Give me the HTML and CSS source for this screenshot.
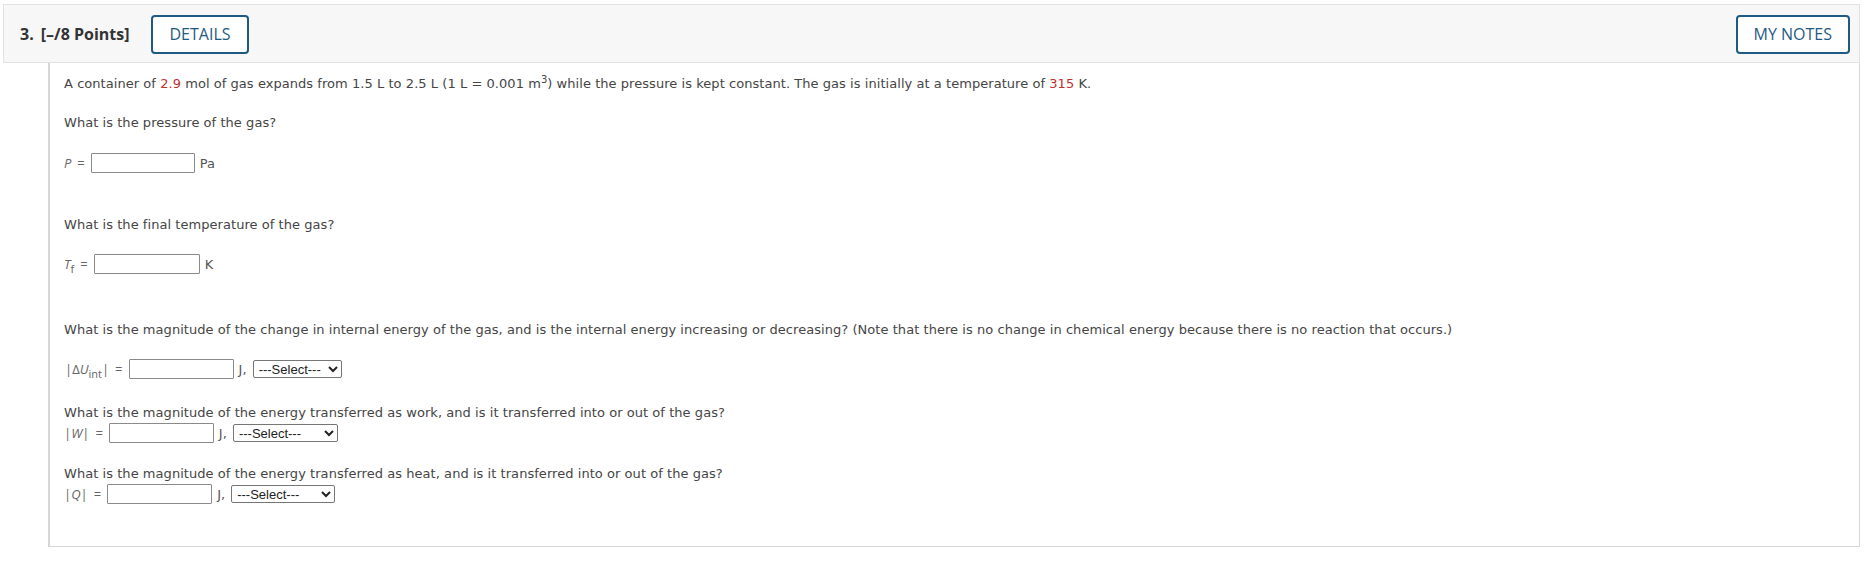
FILE: index.html
```html
<!DOCTYPE html>
<html>
<head>
<meta charset="utf-8">
<link rel="stylesheet" href="styles.css">
</head>
<body>
<div class="question">
  <div class="q-header">
    <div class="q-title"><span class="q-num">3.</span><span class="q-pts">[–/8 Points]</span></div>
    <button class="btn">DETAILS</button>
    <div class="spacer"></div>
    <button class="btn">MY NOTES</button>
  </div>
  <div class="q-body">
    <p class="txt l1">A container of <span class="red">2.9</span> mol of gas expands from 1.5 L to 2.5 L (1 L = 0.001 m<sup>3</sup>) while the pressure is kept constant. The gas is initially at a temperature of <span class="red">315</span> K.</p>
    <p class="txt q1">What is the pressure of the gas?</p>
    <div class="row r-p">
      <span class="lbl"><i>P</i><span class="eq">=</span></span>
      <input class="ans w104" type="text">
      <span class="unit">Pa</span>
    </div>
    <p class="txt q2">What is the final temperature of the gas?</p>
    <div class="row r-t">
      <span class="lbl"><i>T</i><sub>f</sub><span class="eq">=</span></span>
      <input class="ans w106" type="text">
      <span class="unit">K</span>
    </div>
    <p class="txt q3">What is the magnitude of the change in internal energy of the gas, and is the internal energy increasing or decreasing? (Note that there is no change in chemical energy because there is no reaction that occurs.)</p>
    <div class="row r-u">
      <span class="lbl">|Δ<i>U</i><sub>int</sub>|<span class="eq">=</span></span>
      <input class="ans w105" type="text">
      <span class="unit">J,</span>
      <select class="sel s89"><option>---Select---</option><option>increasing</option><option>decreasing</option></select>
    </div>
    <p class="txt q4">What is the magnitude of the energy transferred as work, and is it transferred into or out of the gas?</p>
    <div class="row r-w">
      <span class="lbl">|<i>W</i>|<span class="eq">=</span></span>
      <input class="ans w105" type="text">
      <span class="unit">J,</span>
      <select class="sel s105"><option>---Select---</option><option>into</option><option>out of</option></select>
    </div>
    <p class="txt q5">What is the magnitude of the energy transferred as heat, and is it transferred into or out of the gas?</p>
    <div class="row r-q">
      <span class="lbl">|<i>Q</i>|<span class="eq">=</span></span>
      <input class="ans w105" type="text">
      <span class="unit">J,</span>
      <select class="sel s104"><option>---Select---</option><option>into</option><option>out of</option></select>
    </div>
  </div>
</div>
</body>
</html>
```

FILE: styles.css
```css
html, body {
  margin: 0;
  padding: 0;
  background: #fff;
}

.question {
  margin: 4px 10px 0 3px;
}

.q-header {
  display: flex;
  align-items: center;
  height: 57px;
  background: #f7f7f7;
  border: 1px solid #e2e2e2;
  padding: 0 9px 0 16px;
  font-family: "Open Sans", sans-serif;
}

.q-title {
  font-size: 16px;
  font-weight: 700;
  color: #333;
  margin-right: 22px;
}

.q-num {
  margin-right: 7px;
}

.spacer {
  flex: 1;
}

.btn {
  font-family: "Open Sans", sans-serif;
  font-size: 16px;
  font-weight: 400;
  color: #1f5a82;
  background: #fff;
  border: 2px solid #1f5a82;
  border-radius: 4px;
  height: 39px;
  padding: 0 16px;
  margin-top: 1px;
}

.q-body {
  margin-left: 45px;
  border-left: 2px solid #d6d6d6;
  border-right: 1px solid #d6d6d6;
  border-bottom: 1px solid #d6d6d6;
  padding: 13px 12px 41px 14px;
  font-family: "DejaVu Sans", Verdana, sans-serif;
  font-size: 13px;
  letter-spacing: 0.05px;
  color: #454545;
}

.txt {
  margin: 0;
  line-height: 16px;
}

.txt sup {
  font-size: 10px;
  line-height: 0;
  vertical-align: 5px;
}

.red {
  color: #c23030;
}

.q1 { margin-top: 23px; }
.q2 { margin-top: 43px; }
.q3 { margin-top: 47px; }
.q4 { margin-top: 25px; }
.q5 { margin-top: 22px; }

.row {
  display: flex;
  align-items: center;
  height: 22px;
}

.r-p { margin-top: 21px; }
.r-t { margin-top: 20px; }
.r-u { margin-top: 20px; padding-left: 1px; }
.r-w { margin-top: 1px; }
.r-q { margin-top: 1px; }

.lbl {
  font-family: "Open Sans", sans-serif;
  font-size: 13px;
  letter-spacing: 0;
  color: #666;
  white-space: nowrap;
}

.lbl sub {
  font-size: 11px;
  line-height: 0;
  vertical-align: -4px;
}

.eq {
  margin: 0 6px 0 6px;
}

.ans {
  box-sizing: border-box;
  height: 20px;
  border: 1px solid #8a8a8a;
  border-radius: 1px;
  padding: 0 3px;
  margin: 0;
  background: #fff;
}

.w104 { width: 104px; }
.w105 { width: 105px; }
.w106 { width: 106px; }

.unit {
  margin-left: 5px;
  color: #555;
}

.sel {
  box-sizing: border-box;
  height: 18px;
  margin-left: 6px;
  font-family: "Liberation Sans", Arial, sans-serif;
  font-size: 13px;
  letter-spacing: 0;
  color: #222;
  border: 1px solid #767676;
  border-radius: 2px;
  background: #fff;
  padding: 0 0 0 1px;
}

.s89 { width: 89px; }
.s104 { width: 104px; }
.s105 { width: 105px; }
```
